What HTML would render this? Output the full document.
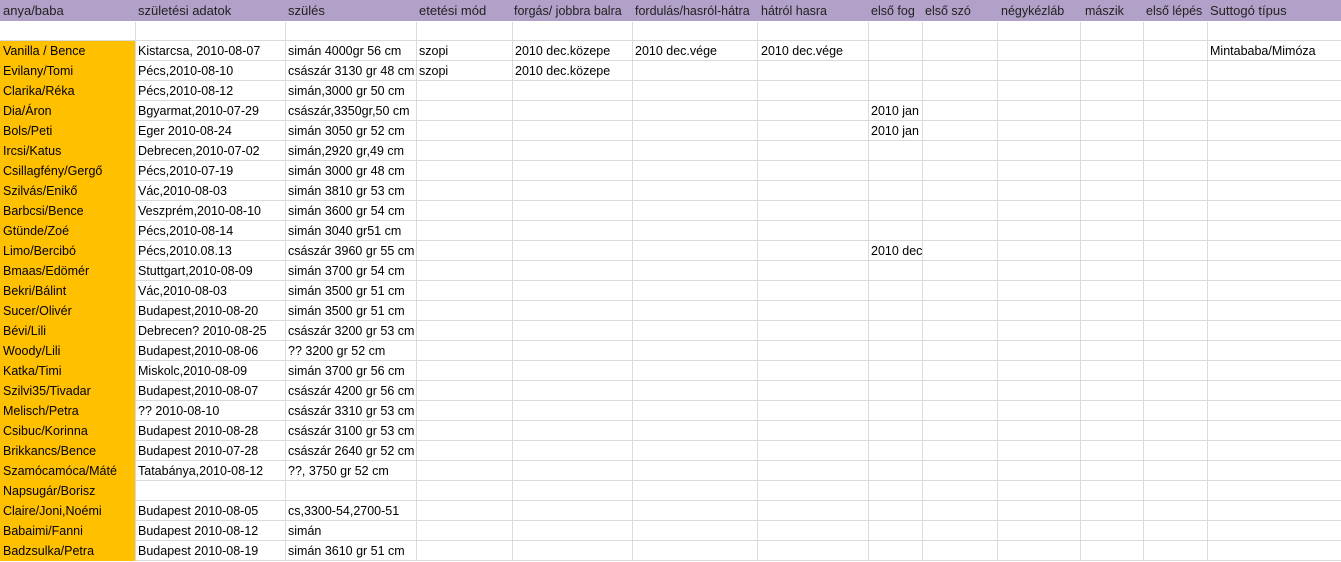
<!DOCTYPE html>
<html><head><meta charset="utf-8"><style>
body{margin:0;width:1341px;height:561px;overflow:hidden;background:#fff;font-family:"Liberation Sans",sans-serif;position:relative}
.hdr{position:absolute;left:0;top:0;width:1341px;height:21px;background:#b1a0c7;border-bottom:1px solid #fff}
.h{position:absolute;top:3px;font-size:13px;color:#222;white-space:nowrap}
.h.s{font-size:12.5px;top:4px}
.vl{position:absolute;top:22px;width:1px;height:539px;background:#dadada}
.hl{position:absolute;left:135px;width:1206px;height:1px;background:#dadada}
.or{position:absolute;left:0;top:41px;width:135px;height:520px;background:#ffc000}
.c{position:absolute;font-size:12.5px;color:#000;white-space:nowrap;line-height:21px}
</style></head><body>
<div class="hdr">
<span class="h" style="left:3px">anya/baba</span>
<span class="h" style="left:138px">születési adatok</span>
<span class="h" style="left:288px">szülés</span>
<span class="h" style="left:419px">etetési mód</span>
<span class="h s" style="left:514px">forgás/ jobbra balra</span>
<span class="h s" style="left:635px">fordulás/hasról-hátra</span>
<span class="h s" style="left:761px">hátról hasra</span>
<span class="h s" style="left:871px">első fog</span>
<span class="h s" style="left:925px">első szó</span>
<span class="h s" style="left:1001px">négykézláb</span>
<span class="h s" style="left:1085px">mászik</span>
<span class="h s" style="left:1146px">első lépés</span>
<span class="h" style="left:1210px">Suttogó típus</span>
</div>
<div class="or"></div>
<div id="g"></div>
<script>
var xs=[135,285,416,512,632,757,868,922,997,1080,1143,1207];
var h='';
xs.forEach(function(x){h+='<div class="vl" style="left:'+x+'px"></div>'});
h+='<div class="hl" style="top:40px;left:0;width:1341px"></div>';
for(var i=1;i<=26;i++){h+='<div class="hl" style="top:'+(40+i*20)+'px"></div>'}
var rows=[
["Vanilla / Bence","Kistarcsa, 2010-08-07","simán 4000gr 56 cm","szopi","2010 dec.közepe","2010 dec.vége","2010 dec.vége","","","","","","Mintababa/Mimóza"],
["Evilany/Tomi","Pécs,2010-08-10","császár 3130 gr 48 cm","szopi","2010 dec.közepe"],
["Clarika/Réka","Pécs,2010-08-12","simán,3000 gr 50 cm"],
["Dia/Áron","Bgyarmat,2010-07-29","császár,3350gr,50 cm","","","","","2010 jan"],
["Bols/Peti","Eger 2010-08-24","simán 3050 gr 52 cm","","","","","2010 jan"],
["Ircsi/Katus","Debrecen,2010-07-02","simán,2920 gr,49 cm"],
["Csillagfény/Gergő","Pécs,2010-07-19","simán 3000 gr 48 cm"],
["Szilvás/Enikő","Vác,2010-08-03","simán 3810 gr 53 cm"],
["Barbcsi/Bence","Veszprém,2010-08-10","simán 3600 gr 54 cm"],
["Gtünde/Zoé","Pécs,2010-08-14","simán 3040 gr51 cm"],
["Limo/Bercibó","Pécs,2010.08.13","császár 3960 gr 55 cm","","","","","2010 dec"],
["Bmaas/Edömér","Stuttgart,2010-08-09","simán 3700 gr 54 cm"],
["Bekri/Bálint","Vác,2010-08-03","simán 3500 gr 51 cm"],
["Sucer/Olivér","Budapest,2010-08-20","simán 3500 gr 51 cm"],
["Bévi/Lili","Debrecen? 2010-08-25","császár 3200 gr 53 cm"],
["Woody/Lili","Budapest,2010-08-06","?? 3200 gr 52 cm"],
["Katka/Timi","Miskolc,2010-08-09","simán 3700 gr 56 cm"],
["Szilvi35/Tivadar","Budapest,2010-08-07","császár 4200 gr 56 cm"],
["Melisch/Petra","?? 2010-08-10","császár 3310 gr 53 cm"],
["Csibuc/Korinna","Budapest 2010-08-28","császár 3100 gr 53 cm"],
["Brikkancs/Bence","Budapest 2010-07-28","császár 2640 gr 52 cm"],
["Szamócamóca/Máté","Tatabánya,2010-08-12","??, 3750 gr 52 cm"],
["Napsugár/Borisz"],
["Claire/Joni,Noémi","Budapest 2010-08-05","cs,3300-54,2700-51"],
["Babaimi/Fanni","Budapest 2010-08-12","simán"],
["Badzsulka/Petra","Budapest 2010-08-19","simán 3610 gr 51 cm"]];
var lx=[3,138,288,419,515,635,761,871,925,1001,1085,1146,1210];
rows.forEach(function(r,i){r.forEach(function(t,j){if(t)h+='<div class="c" style="left:'+lx[j]+'px;top:'+(41+i*20)+'px">'+t+'</div>'})});
document.getElementById('g').innerHTML=h;
</script>
</body></html>
